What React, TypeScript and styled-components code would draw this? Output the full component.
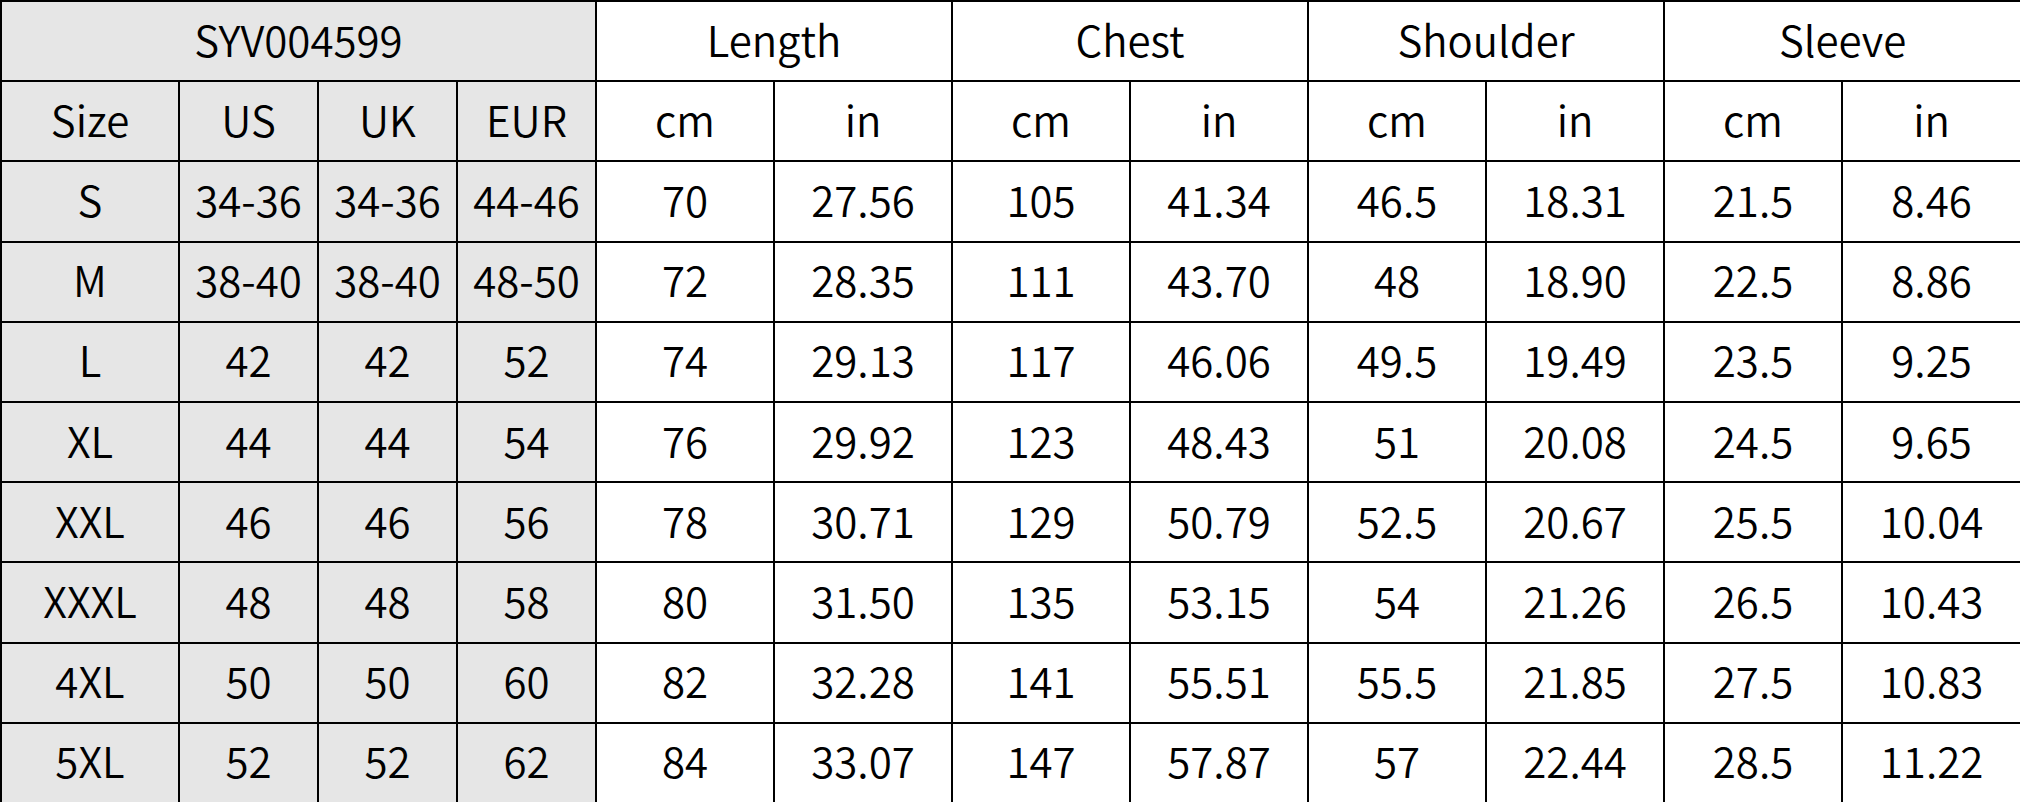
import React from "react";
import styled, { createGlobalStyle } from "styled-components";

const GlobalStyle = createGlobalStyle`
  html, body {
    margin: 0;
    padding: 0;
    background: #ffffff;
  }
  #root {
    width: 2020px;
    height: 802px;
  }
`;

const Table = styled.table`
  width: 2020px;
  height: 802px;
  table-layout: fixed;
  border-collapse: collapse;
  font-family: "Noto Sans CJK SC", "Noto Sans", sans-serif;
  font-size: 42px;
  color: #000;
  background: #fff;
`;

const Row = styled.tr`
  height: 80.2px;
`;

const Cell = styled.td<{ $shade?: boolean }>`
  border: 2px solid #000;
  padding: 0 0 5px 0;
  text-align: center;
  vertical-align: middle;
  white-space: nowrap;
  line-height: 1;
  font-weight: 350;
  background: ${(p) => (p.$shade ? "#e6e6e6" : "#ffffff")};
`;

type SizeRow = {
  size: string;
  us: string;
  uk: string;
  eur: string;
  values: string[];
};

const rows: SizeRow[] = [
  { size: "S", us: "34-36", uk: "34-36", eur: "44-46", values: ["70", "27.56", "105", "41.34", "46.5", "18.31", "21.5", "8.46"] },
  { size: "M", us: "38-40", uk: "38-40", eur: "48-50", values: ["72", "28.35", "111", "43.70", "48", "18.90", "22.5", "8.86"] },
  { size: "L", us: "42", uk: "42", eur: "52", values: ["74", "29.13", "117", "46.06", "49.5", "19.49", "23.5", "9.25"] },
  { size: "XL", us: "44", uk: "44", eur: "54", values: ["76", "29.92", "123", "48.43", "51", "20.08", "24.5", "9.65"] },
  { size: "XXL", us: "46", uk: "46", eur: "56", values: ["78", "30.71", "129", "50.79", "52.5", "20.67", "25.5", "10.04"] },
  { size: "XXXL", us: "48", uk: "48", eur: "58", values: ["80", "31.50", "135", "53.15", "54", "21.26", "26.5", "10.43"] },
  { size: "4XL", us: "50", uk: "50", eur: "60", values: ["82", "32.28", "141", "55.51", "55.5", "21.85", "27.5", "10.83"] },
  { size: "5XL", us: "52", uk: "52", eur: "62", values: ["84", "33.07", "147", "57.87", "57", "22.44", "28.5", "11.22"] },
];

const measures = ["Length", "Chest", "Shoulder", "Sleeve"];
const colWidths = [178, 139, 139, 139, 178, 178, 178, 178, 178, 178, 178, 179];

export default function App() {
  return (
    <>
      <GlobalStyle />
      <Table>
        <colgroup>
          {colWidths.map((w, i) => (
            <col key={i} style={{ width: w }} />
          ))}
        </colgroup>
        <thead>
          <Row>
            <Cell as="th" colSpan={4} $shade>
              SYV004599
            </Cell>
            {measures.map((m) => (
              <Cell as="th" key={m} colSpan={2}>
                {m}
              </Cell>
            ))}
          </Row>
          <Row>
            {["Size", "US", "UK", "EUR"].map((h) => (
              <Cell as="th" key={h} $shade>
                {h}
              </Cell>
            ))}
            {measures.map((m) => (
              <React.Fragment key={m}>
                <Cell as="th">cm</Cell>
                <Cell as="th">in</Cell>
              </React.Fragment>
            ))}
          </Row>
        </thead>
        <tbody>
          {rows.map((r) => (
            <Row key={r.size}>
              <Cell $shade>{r.size}</Cell>
              <Cell $shade>{r.us}</Cell>
              <Cell $shade>{r.uk}</Cell>
              <Cell $shade>{r.eur}</Cell>
              {r.values.map((v, i) => (
                <Cell key={i}>{v}</Cell>
              ))}
            </Row>
          ))}
        </tbody>
      </Table>
    </>
  );
}
